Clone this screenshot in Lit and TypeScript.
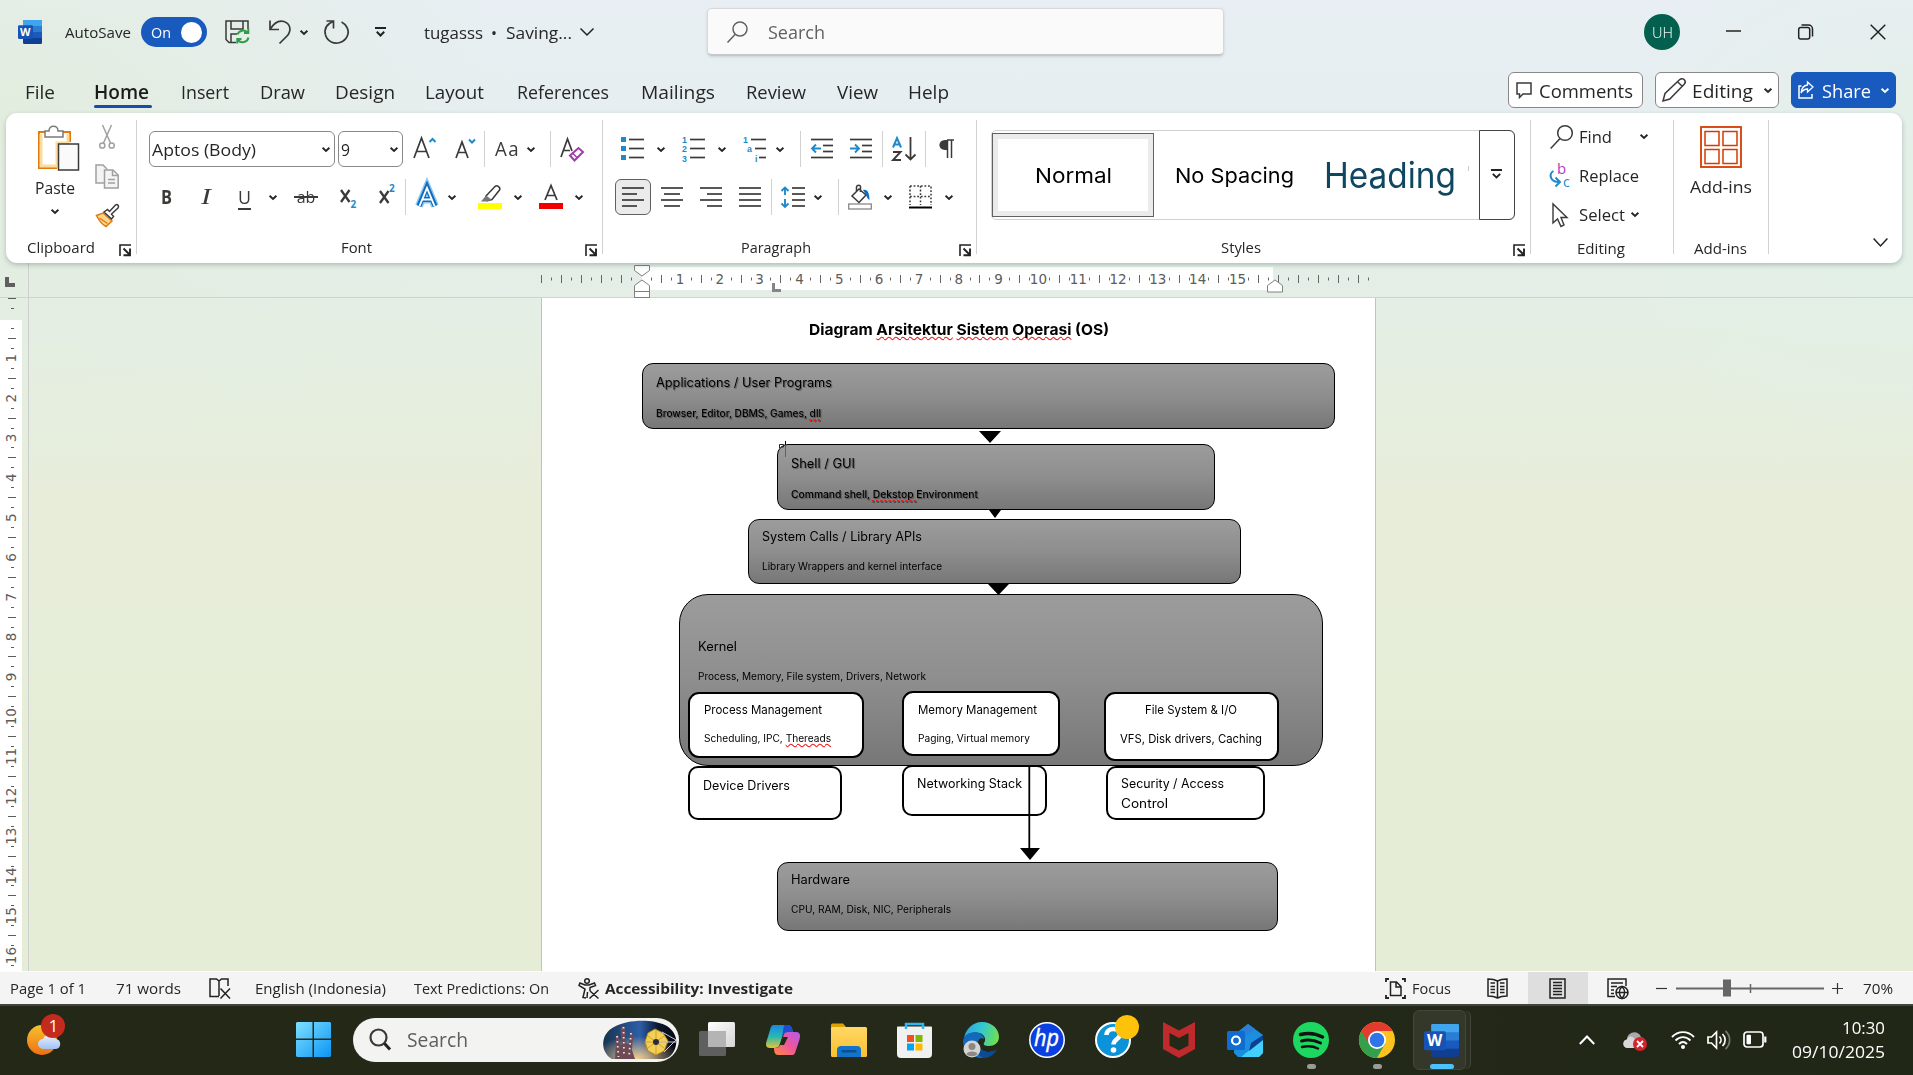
import { LitElement, html, svg, css, unsafeCSS } from "lit";
import { customElement, property } from "lit/decorators.js";
import { styleMap } from "lit/directives/style-map.js";

/* Spacing utilities: .m0 ... .m219 set the left margin in pixels. */
const spacing = unsafeCSS(
  Array.from({ length: 220 }, (_, i) => `.m${i}{margin-left:${i}px}`).join("")
);

/* Text squeezed or stretched horizontally to an exact width. */
@customElement("fit-text")
class FitText extends LitElement {
  @property({ type: Number }) w = 0;
  static styles = css`
    :host { display: inline-block; flex: none; white-space: nowrap; }
    .inner { display: inline-block; transform-origin: 0 50%; white-space: nowrap; }
  `;
  render() {
    return html`<span class="inner"><slot></slot></span>`;
  }
  updated() {
    const el = this.renderRoot.querySelector(".inner") as HTMLElement;
    el.style.transform = "";
    const natural = el.getBoundingClientRect().width;
    this.style.width = this.w + "px";
    if (natural > 0) el.style.transform = `scaleX(${this.w / natural})`;
  }
}

const ft = (w: number, text: unknown, cls = "") => html`<fit-text class=${cls} .w=${w}>${text}</fit-text>`;

const ic = (w: number, h: number, body: unknown, cls = "") =>
  html`<svg class="ic ${cls}" width=${w} height=${h} viewBox="0 0 ${w} ${h}" fill="none" stroke="#3b3a39" stroke-width="1.5">${body}</svg>`;

const chev = (cls = "", color = "#262626") =>
  html`<svg class="ic ${cls}" width="8" height="5" viewBox="0 0 8 5" fill="none" stroke=${color} stroke-width="1.9"><path d="M.6 .7 4 4 7.4 .7"/></svg>`;

const launcher = (cls: string) =>
  ic(12, 12, svg`<path d="M1 12V1H12" stroke="#222" stroke-width="1.6"/><path d="M4.500 4.500 10.500 10.500M11 4.500V11.200H4.500" stroke="#222" stroke-width="1.900"/>`, cls);

const BLUE = "#1f8acb";

const wordLogo = (w: number, h: number) => html`
  <svg class="ic" width=${w} height=${h} viewBox="0 0 24 24" preserveAspectRatio="none">
    <rect x="5" y="0" width="19" height="24" rx="1.2" fill="#103f91"/>
    <rect x="5" y="0" width="19" height="18" rx="1" fill="#185abd"/>
    <rect x="5" y="0" width="19" height="12" rx="1" fill="#2b7cd3"/>
    <path d="M6 0H23a1 1 0 0 1 1 1V6H5V1a1 1 0 0 1 1-1Z" fill="#41a5ee"/>
    <rect x="0" y="5.300" width="15" height="13.700" rx="1.200" fill="#1653b5"/>
    <text x="7.300" y="16" text-anchor="middle" font-family="Open Sans, sans-serif" font-weight="700" font-size="11" fill="#fff" textLength="10.500" lengthAdjust="spacingAndGlyphs">W</text>
  </svg>`;

const lines = (rows: number[][]) =>
  rows.map(([x, y, w]) => svg`<path d="M${x} ${y}h${w}" stroke="#3b3a39" stroke-width="1.700"/>`);

type Block = {
  x: number; y: number; w: number; h: number; r: number; kind: string;
  texts: { x: number; cy: number; w: number; cls: string; t: unknown }[];
};

const blocks: Block[] = [
  { x: 642, y: 363, w: 693, h: 66, r: 11, kind: "grey", texts: [
    { x: 656, cy: 383, w: 176, cls: "h sh", t: "Applications / User Programs" },
    { x: 656, cy: 414, w: 165, cls: "s sh", t: html`Browser, Editor, DBMS, Games, <u class="dot">dll</u>` } ] },
  { x: 777, y: 444, w: 438, h: 66, r: 11, kind: "grey", texts: [
    { x: 791, cy: 464, w: 64, cls: "h sh", t: "Shell / GUI" },
    { x: 791, cy: 495, w: 187, cls: "s sh", t: html`Command shell, <u class="dot">Dekstop </u>Environment` } ] },
  { x: 748, y: 519, w: 493, h: 65, r: 11, kind: "grey", texts: [
    { x: 762, cy: 537, w: 160, cls: "h", t: "System Calls / Library APIs" },
    { x: 762, cy: 567, w: 180, cls: "s", t: "Library Wrappers and kernel interface" } ] },
  { x: 688, y: 766, w: 154, h: 54, r: 10, kind: "white", texts: [
    { x: 703, cy: 786, w: 87, cls: "h", t: "Device Drivers" } ] },
  { x: 902, y: 765, w: 145, h: 51, r: 10, kind: "white", texts: [
    { x: 917, cy: 784, w: 105, cls: "h", t: "Networking Stack" } ] },
  { x: 1106, y: 766, w: 159, h: 54, r: 10, kind: "white", texts: [
    { x: 1121, cy: 784, w: 103, cls: "h", t: "Security / Access" },
    { x: 1121, cy: 804, w: 47, cls: "h", t: "Control" } ] },
  { x: 679, y: 594, w: 644, h: 172, r: 29, kind: "grey", texts: [
    { x: 698, cy: 647, w: 39, cls: "h", t: "Kernel" },
    { x: 698, cy: 677, w: 228, cls: "s", t: "Process, Memory, File system, Drivers, Network" } ] },
  { x: 688, y: 692, w: 176, h: 66, r: 11, kind: "white", texts: [
    { x: 704, cy: 710, w: 118, cls: "p", t: "Process Management" },
    { x: 704, cy: 739, w: 127, cls: "s", t: html`Scheduling, IPC, <u>Thereads</u>` } ] },
  { x: 902, y: 691, w: 158, h: 65, r: 11, kind: "white", texts: [
    { x: 918, cy: 710, w: 119, cls: "p", t: "Memory Management" },
    { x: 918, cy: 739, w: 112, cls: "s", t: "Paging, Virtual memory" } ] },
  { x: 1104, y: 692, w: 175, h: 69, r: 11, kind: "white", texts: [
    { x: 1145, cy: 710, w: 92, cls: "p", t: "File System & I/O" },
    { x: 1120, cy: 739, w: 142, cls: "p", t: "VFS, Disk drivers, Caching" } ] },
  { x: 777, y: 862, w: 501, h: 69, r: 11, kind: "grey", texts: [
    { x: 791, cy: 880, w: 59, cls: "h", t: "Hardware" },
    { x: 791, cy: 910, w: 160, cls: "s", t: "CPU, RAM, Disk, NIC, Peripherals" } ] },
];

/* Origin of the paper's inner area in window coordinates. */
const OX = 542, OY = 298;
const CM = 39.82;

@customElement("app-root")
class AppRoot extends LitElement {
  static styles = [spacing, css`
    :host {
      display: block; width: 1913px; height: 1075px; overflow: hidden;
      font-family: "Open Sans", "Noto Sans", sans-serif; color: #262626;
    }
    .app {
      display: flex; flex-direction: column; height: 1075px; overflow: hidden;
      background:
        radial-gradient(ellipse 520px 330px at 0 130px, rgba(226,237,222,1), rgba(228,238,224,0)),
        radial-gradient(ellipse 300px 260px at 1913px 200px, rgba(226,240,230,1), rgba(226,240,230,0)),
        linear-gradient(180deg, #e8eef3 0, #e7eef1 110px, #e4eee8 265px, #e5eee1 370px, #e7edd9 500px, #e6edd6 970px);
    }
    .ic { flex: none; display: block; overflow: visible; }
    .row { display: flex; align-items: center; }
    .col { display: flex; flex-direction: column; }
    .grow { flex: 1; }

    .title { height: 66px; box-sizing: border-box; padding-bottom: 2px; font-size: 15px; }
    .toggle { width: 66px; height: 30px; border-radius: 15px; background: #185abd; color: #fff; }
    .knob { width: 21px; height: 21px; border-radius: 50%; background: #fff; }
    .docname { font-size: 16.5px; }
    .search {
      width: 517px; height: 48px; border-radius: 5px; background: #fafafa; color: #616161;
      box-sizing: border-box; border: 1px solid #d6d9db; border-bottom: 2px solid #c5c8ca; font-size: 19px;
      box-shadow: 0 1px 3px rgba(0,0,0,.12);
    }
    .avatar { width: 36px; height: 36px; border-radius: 50%; background: #03604f; color: #e8f3f1; justify-content: center; font-size: 15px; font-family: "Noto Sans", sans-serif; font-weight: 300; }

    .tabs { height: 47px; align-items: stretch; font-size: 19px; }
    .tab { padding-top: 13px; height: 34px; line-height: 26px; display: flex; flex-direction: column; }
    .tab.on { font-weight: 600; color: #1b1b1b; }
    .tab.on::after { content: ""; width: 58px; height: 3px; margin-top: 0; border-radius: 2px; background: #154fa9; }
    .btn { height: 36px; margin-top: 6px; box-sizing: border-box; border: 1px solid #8a8886; border-radius: 6px; background: #fff; font-size: 18.500px; }
    .btn.share { background: #185abd; border-color: #185abd; color: #fff; }

    .ribbon {
      display: flex; position: relative; z-index: 2; flex: none; height: 150px; margin: 0 11px 0 6px; background: #fff;
      border-radius: 11px; box-shadow: 0 2px 5px rgba(40,70,60,.28);
    }
    .vs { flex: none; width: 1px; margin: 7px 0 9px; background: #d1d1d1; }
    .group { flex: none; display: flex; flex-direction: column; }
    .g-clip { width: 130px; } .g-font { width: 465px; } .g-para { width: 373px; }
    .g-style { width: 553px; } .g-edit { width: 142px; } .g-add { width: 94px; }
    .cmds { height: 102px; padding-top: 18px; box-sizing: border-box; display: flex; flex-direction: column; gap: 12px; }
    .r36 { height: 36px; display: flex; align-items: center; flex: none; }
    .label { height: 22px; margin-top: 21px; font-size: 15px; display: flex; align-items: center; }
    .label .ic { margin-top: 5px; }
    .clipcmds { height: 102px; display: flex; }
    .paste { margin-left: 27px; width: 44px; padding-top: 12px; display: flex; flex-direction: column; align-items: center; font-size: 16.500px; }
    .paste .clip { margin-left: 6px; }
    .paste .t { height: 24px; margin-top: 5px; }
    .paste .chevwrap { margin-top: 9px; }
    .clipside { margin-left: 18px; padding-top: 12px; display: flex; flex-direction: column; gap: 14px; align-items: center; width: 24px; }
    .combo { height: 36px; border: 1px solid #8a8886; border-radius: 6px; box-sizing: border-box; font-size: 17px; }
    .combo.fam { width: 186px; } .combo.size { width: 65px; }
    .ms { width: 1px; height: 36px; background: #d1d1d1; flex: none; }
    .glyph { line-height: 24px; height: 24px; flex: none; color: #3b3a39; }
    .b { font-weight: 700; font-size: 19.500px; }
    .i { font-family: "Liberation Serif", serif; font-style: italic; font-size: 23px; }
    .u { font-size: 19px; }
    .uline { text-decoration: underline; text-underline-offset: 4px; text-decoration-thickness: 1.500px; }
    .st { font-size: 17px; }
    .strike { text-decoration: line-through; text-decoration-thickness: 1.500px; }
    .aa { font-size: 20px; letter-spacing: 1.500px; }
    .sel { width: 36px; height: 36px; box-sizing: border-box; border: 1px solid #616161; border-radius: 6px; background: #ebebeb; display: flex; align-items: center; justify-content: center; }
    .gallery { margin: 17px 0 0 14px; width: 524px; height: 90px; box-sizing: border-box; border: 1px solid #d1d1d1; border-radius: 5px; display: flex; font-family: "Inter", sans-serif; color: #000; }
    .gcell { display: flex; align-items: center; font-size: 20.500px; }
    .normal { width: 162px; height: 84px; margin: 2px 0 0 0; box-sizing: border-box; border: 1px solid #616161; background: #fff; box-shadow: inset 0 0 0 5px #ebebeb; justify-content: center; }
    .heading { font-size: 35.500px; color: #0f4761; }
    .tickmark { width: 1px; height: 5px; background: #ccc; margin-top: -14px; }
    .more { margin: -1px -1px -1px auto; width: 36px; border: 1px solid #444; border-radius: 0 6px 6px 0; box-sizing: border-box; display: flex; align-items: center; justify-content: center; padding: 0 2px 2px 0; }
    .s-label { margin-top: 16px; }
    .editcmds { height: 123px; padding-top: 4px; box-sizing: border-box; display: flex; flex-direction: column; font-size: 17px; }
    .editrow { height: 39px; display: flex; align-items: center; }
    .addcmds { height: 123px; padding-top: 13px; box-sizing: border-box; display: flex; flex-direction: column; align-items: center; font-size: 17px; }
    .addcmds fit-text { margin-top: 7px; }
    .e-label { height: 24px; font-size: 15px; display: flex; align-items: center; justify-content: center; padding-right: 2px; }
    .collapse { margin: 125px 0 0 104px; }

    .hruler { flex: none; height: 35px; position: relative; }
    .ruler { display: block; }
    .ruler text { font-family: "DejaVu Sans", sans-serif; fill: #5c5c5c; }
    .work { flex: none; display: flex; height: 673px; overflow: hidden; }
    .edge { width: 1px; background: #cdd0cf; margin-left: 6px; }
    .paper { position: relative; margin-left: 512px; width: 833px; height: 673px; background: #fff; border: solid #c0c2c0; border-width: 0 1px; font-family: "Inter", sans-serif; color: #000; }
    .heading1 { position: absolute; left: 267px; top: 20px; line-height: 24px; font-size: 15.200px; font-weight: 700; }
    .block { position: absolute; box-sizing: border-box; border: 1px solid #000; }
    .block.grey { background: linear-gradient(180deg, #9c9c9c, #8e8e8e 50%, #777); }
    .block.white { background: #fff; border-width: 2px; }
    .txt { position: absolute; line-height: 20px; height: 20px; }
    .txt.h { font-size: 12.500px; } .txt.p { font-size: 12px; } .txt.s { font-size: 9.800px; }
    .txt.sh { text-shadow: 1px 1px 1px rgba(0,0,0,.4); font-weight: 400; }
    .txt.s.sh { font-weight: 500; }
    u { text-decoration: underline wavy #f01818 1px; text-underline-offset: 1px; text-decoration-skip-ink: none; }
    u.dot { text-decoration-style: dotted; text-decoration-thickness: 1.500px; text-underline-offset: 2px; }
    .over { position: absolute; left: 0; top: 0; }

    .status { flex: none; height: 33px; margin-top: 0; border-top: 1px solid #fdfdfd; background: #f4f4f4; font-size: 15px; box-sizing: border-box; }
    .status .bold { font-weight: 700; }
    .view { width: 60px; height: 32px; background: #dedede; display: flex; align-items: center; justify-content: center; padding-right: 2px; box-sizing: border-box; }
    .taskbar { flex: none; height: 71px; box-sizing: border-box; border-top: 2px solid #42453a; padding-bottom: 2px; background: linear-gradient(90deg, #232817, #252919 50%, #202717); color: #fff; }
    .pill { width: 326px; height: 44px; border-radius: 22px; background: #f3f3f1; color: #5e5e5e; font-size: 19.500px; }
    .clock { width: 93px; display: flex; flex-direction: column; align-items: flex-end; font-size: 16.500px; line-height: 24px; }
    .run { height: 60px; display: flex; flex-direction: column; align-items: center; }
    .run .ic { margin-top: 12px; }
    .pip { width: 9px; height: 5px; border-radius: 3px; background: #9a9b93; margin-top: 6px; }
    .active { width: 53px; box-sizing: border-box; border: 1px solid #43473a; border-radius: 6px; background: #33382a; box-shadow: 5px 0 0 -1px #2b3022, 6px 0 0 -1px #43473a; }
    .active .ic { margin: 13px 0 0 4px; }
    .active .pip { width: 24px; background: #4cc2ff; margin: 7px 0 0 5px; }
  `];

  titleBar() {
    return html`<div class="title row">
      <span class="m18"></span>${wordLogo(24, 24)}
      ${ft(66, "AutoSave", "m23")}
      <div class="toggle row m10">${ft(20, "On", "m10")}<span class="knob m10"></span></div>
      ${ic(25, 24, svg`<path d="M11 22.500H4L1 19.500V1H23V9M6 1V9H18V1M6 22V14H12"/><path d="M12.500 14.500a6 6 0 0 1 10-2M23.300 8.500V13H19M23.500 17.500a6 6 0 0 1-10.500 2.500M12.300 23.500V19H16.500" stroke="#2f9e48" stroke-width="2"/>`, "m18")}
      ${ic(22, 24, svg`<path d="M1 .5V9.500H10M1.300 9C5 3 10 0 15 1.500 22 4 22.500 11 18 16L10.500 23.500" stroke-width="1.700"/>`, "m19")}
      ${chev("m9")}
      ${ic(25, 24, svg`<path d="M2.500 1H9.500V8.500M9 1.500C3 4 0 9 1.500 15 3.500 21.500 10 24.500 16 22.500 23 20 26 13 23 7.500 21.500 4.500 19.500 3 17.500 2" stroke-width="1.700"/>`, "m16")}
      ${ic(11, 10, svg`<path d="M0 1H11M1.800 4.800 5.500 8.500 9.200 4.800" stroke="#222" stroke-width="2"/>`, "m26")}
      <span class="docname row m38">${ft(59, "tugasss")}${ft(6, "•", "m8")}${ft(66, "Saving...", "m9")}</span>
      ${ic(14, 8, svg`<path d="M.5 .5 7 7 13.500 .5" stroke="#222"/>`, "m8")}
      <div class="search row m113">
        ${ic(21, 22, svg`<circle cx="13" cy="8" r="7" stroke="#616161"/><path d="M8.500 13 .5 21.500" stroke="#616161"/>`, "m19")}
        ${ft(57, "Search", "m20")}
      </div>
      <span class="grow"></span>
      <span class="avatar row">${ft(21, "UH")}</span>
      ${ic(15, 16, svg`<path d="M0 7H15" stroke="#222"/>`, "m46")}
      ${ic(15, 16, svg`<rect x=".7" y="3.500" width="11" height="11.500" rx="2" stroke="#222"/><path d="M3.500 1H10.500a4 4 0 0 1 4 4V12.500" stroke="#222"/>`, "m57")}
      ${ic(16, 16, svg`<path d="M.7 .7 15.300 15.300M15.300 .7 .7 15.300" stroke="#222"/>`, "m57")}
      <span class="m27"></span>
    </div>`;
  }

  tabBar() {
    const tabs: [number, string, number][] = [[30, "File", 25], [55, "Home", 39], [48, "Insert", 32], [45, "Draw", 31], [60, "Design", 30],
      [59, "Layout", 30], [92, "References", 33], [74, "Mailings", 32], [60, "Review", 31], [41, "View", 31], [41, "Help", 30]];
    return html`<div class="tabs row">
      ${tabs.map(([w, t, m]) => html`<div class="tab m${t === "Insert" ? m - 3 : m} ${t === "Home" ? "on" : ""}">${ft(w, t)}</div>`)}
      <span class="grow"></span>
      <div class="btn row">
        ${ic(16, 17, svg`<path d="M1 1H15V12H7L3.500 15.500V12H1Z"/>`, "m7")}${ft(94, "Comments", "m7")}<span class="m9"></span>
      </div>
      <div class="btn row m12">
        ${ic(24, 24, svg`<path d="M1 23 3 15.500 17.500 1.800C19.500 0 21.500 .8 22.300 1.700 23.500 3 23.500 5 22 6.500L7.800 21ZM15.500 3.800 20.500 8.500"/>`, "m6")}
        ${ft(61, "Editing", "m6")}${chev("m11")}<span class="m6"></span>
      </div>
      <div class="btn share row m12">
        ${ic(16, 18, svg`<path d="M3.500 5H1V17H14V13" stroke="#fff"/><path d="M9.500 1 15 6 9.500 11V8C6.500 8 4.500 9.500 3 12 3.500 7 6 4.500 9.500 4Z" stroke="#fff" stroke-width="1.300"/>`, "m6")}
        ${ft(49, "Share", "m8")}${chev("m10", "#fff")}<span class="m6"></span>
      </div>
      <span class="m17"></span>
    </div>`;
  }

  clipboard() {
    return html`<div class="group g-clip">
      <div class="clipcmds">
        <div class="paste">
          ${ic(42, 46, svg`<path d="M9 7H2V43H20M26 7H33V17" stroke="#e07b12" stroke-width="2"/><path d="M4 9V41H20V18H31V9" fill="#fff" stroke="#fbdc9f" stroke-width="3"/><path d="M8 12V6H12C12 -.5 21 -.5 21 6H26V12Z" fill="#fff" stroke="#7a7a7a"/><rect x="21.500" y="19" width="20" height="26" fill="#fafafa" stroke="#3b3a39"/>`, "clip")}
          <span class="t">${ft(40, "Paste")}</span>
          <span class="chevwrap">${chev()}</span>
        </div>
        <div class="clipside">
          ${ic(16, 25, svg`<g stroke="#a0a0a0"><path d="M3.500 0 11.500 18M12.500 0 4.500 18"/><circle cx="3.300" cy="20.500" r="2.600"/><circle cx="12.700" cy="20.500" r="2.600"/></g>`)}
          ${ic(24, 25, svg`<g stroke="#a0a0a0"><path d="M9 19H1V1H8L12 5" fill="#f4f4f4"/><path d="M9.500 6H18L23.200 11V24H9.500Z" fill="#f4f4f4"/><path d="M17.500 6V11.500H23M13 15.500H20M13 19H20"/></g>`)}
          ${ic(24, 24, svg`<path d="M1.500 12.500 8 10 17 18 11 23.500C7 21.500 4 17.500 1.500 12.500Z" fill="#fbd690" stroke="#e07b12"/><path d="M4.500 15 12.500 20.500" stroke="#e07b12"/><path d="M9 9 12.500 6.500 14.500 8.500 20.500 2C22.500 .5 24.500 3 23 5L16.500 11 18.500 13.500 16.500 16Z" fill="#fff"/>`)}
        </div>
      </div>
      <div class="label">${ft(68, "Clipboard", "m21")}${launcher("m24")}</div>
    </div>`;
  }

  fontGroup() {
    return html`<div class="group g-font">
      <div class="cmds">
        <div class="r36">
          <div class="combo fam row m12">${ft(104, "Aptos (Body)", "m2")}<span class="grow"></span>${chev()}<span class="m4"></span></div>
          <div class="combo size row m3">${ft(9, "9", "m2")}<span class="grow"></span>${chev()}<span class="m4"></span></div>
          ${ic(24, 26, svg`<path d="M1 22 8.500 2 16 22M3.800 15.500H13.300" stroke-width="1.700"/><path d="M16.500 6 19.500 3 22.500 6" stroke="${BLUE}" stroke-width="2"/>`, "m10")}
          ${ic(21, 26, svg`<path d="M1 22 7 6 13 22M3.300 16.500H10.800" stroke-width="1.700"/><path d="M14 3.500 17 6.500 20 3.500" stroke="${BLUE}" stroke-width="2"/>`, "m18")}
          <span class="ms m8"></span>
          ${ft(25, "Aa", "glyph aa m10")}${chev("m7")}
          <span class="ms m15"></span>
          ${ic(24, 26, svg`<path d="M1 21 7.500 3 12 15M3.500 14.500H10" stroke-width="1.700"/><path d="M10 19.500 18.500 12 23 16 14.500 24.500Z" fill="#fff" stroke="#a33da8" stroke-width="2"/><path d="M12.500 17 17 21.500" stroke="#a33da8"/>`, "m9")}
        </div>
        <div class="r36">
          ${ft(11, "B", "glyph b m24")}${ft(10, "I", "glyph i m29")}${ft(13, html`<span class="uline">U</span>`, "glyph u m27")}${chev("m18")}
          ${ft(24, html`<span class="strike">&thinsp;ab&thinsp;</span>`, "glyph st m17")}
          ${ic(17, 26, svg`<path d="M1 6 9.500 18M9.500 6 1 18" stroke-width="2.300"/><text x="10.500" y="24" font-size="10" font-weight="700" fill="${BLUE}" stroke="none">2</text>`, "m22")}
          ${ic(17, 26, svg`<path d="M1 7 9.500 19M9.500 7 1 19" stroke-width="2.300"/><text x="10" y="8" font-size="10" font-weight="700" fill="${BLUE}" stroke="none">2</text>`, "m22")}
          <span class="ms m9"></span>
          ${ic(24, 26, svg`<path d="M4 22 12 3 20 22M7 15.500H17" stroke="#8fc8f3" stroke-width="8"/><path d="M4 22 12 3 20 22M7 15.500H17" stroke="#0f6cbd" stroke-width="5"/><path d="M4.500 22 12 4 19.500 22M7 15.500H17" stroke="#fff" stroke-width="1.900"/>`, "m9")}
          ${chev("m9")}
          ${ic(24, 26, svg`<rect x="0" y="19" width="24" height="6" fill="#ffff00" stroke="none"/><path d="M8 12 17 2.500C19 .5 23 3.500 21.500 6L14 15.500 9.500 16.500Z"/><path d="M8 11.500 13.500 15.500 10 17.500H3Z" fill="#777" stroke="none"/>`, "m22")}
          ${chev("m12")}
          ${ic(24, 26, svg`<rect x="0" y="19" width="24" height="6" fill="#f00000" stroke="none"/><path d="M6 16 12 1.500 18 16M8 11.500H16" stroke-width="1.700"/>`, "m17")}
          ${chev("m12")}
        </div>
      </div>
      <div class="label">${ft(31, "Font", "m204")}<span class="grow"></span>${launcher("")}<span class="m5"></span></div>
    </div>`;
  }

  paragraphGroup() {
    const num = (x: number, y: number, t: string) =>
      svg`<text x=${x} y=${y} font-family="Liberation Sans, sans-serif" font-size="8.800" font-weight="700" fill=${BLUE} stroke="none">${t}</text>`;
    return html`<div class="group g-para">
      <div class="cmds">
        <div class="r36">
          ${ic(23, 24, svg`<g fill="${BLUE}" stroke="none"><rect y="0" width="5" height="5"/><rect y="9" width="5" height="5"/><rect y="18" width="5" height="5"/></g>${lines([[8, 2.500, 15], [8, 11.500, 15], [8, 20.500, 15]])}`, "m18")}
          ${chev("m13")}
          ${ic(23, 24, svg`${num(0, 5.500, "1")}${num(0, 15, "2")}${num(0, 24.500, "3")}${lines([[8, 2.500, 15], [8, 11.500, 15], [8, 20.500, 15]])}`, "m17")}
          ${chev("m13")}
          ${ic(23, 24, svg`${num(0, 5.500, "1")}${num(4, 15, "a")}${num(12, 24.500, "i")}${lines([[8, 2.500, 15], [12, 11.500, 11], [16, 20.500, 7]])}`, "m17")}
          ${chev("m10")}
          <span class="ms m16"></span>
          ${ic(22, 24, svg`${lines([[0, 2.500, 22], [12, 8.500, 10], [12, 14.500, 10], [0, 20.500, 22]])}<path d="M10 11.500H1.500M5 7.500 1 11.500 5 15.500" stroke="${BLUE}" stroke-width="1.900"/>`, "m10")}
          ${ic(22, 24, svg`${lines([[0, 2.500, 22], [12, 8.500, 10], [12, 14.500, 10], [0, 20.500, 22]])}<path d="M0 11.500H8.500M5 7.500 9 11.500 5 15.500" stroke="${BLUE}" stroke-width="1.900"/>`, "m17")}
          <span class="ms m10"></span>
          ${ic(24, 24, svg`<path d="M1 10.500 5 1 9 10.500M2.500 7.500H7.500" stroke="${BLUE}" stroke-width="2"/><path d="M1 15H8.500L1 23H9" stroke-width="1.900"/><path d="M18.500 0V22M13.500 17.500 18.500 22.500 23.500 17.500" stroke-width="1.800"/>`, "m9")}
          <span class="ms m9"></span>
          ${ic(15, 20, svg`<path d="M8 1H15M8.500 1V19M12.500 1V19"/><path d="M8.500 1H6C-1.500 1-1.500 11 6 11H8.500Z" fill="#3b3a39" stroke="none"/>`, "m13")}
        </div>
        <div class="r36">
          <span class="sel m12">${ic(22, 24, lines([[0, 3, 22], [0, 9, 15], [0, 15, 22], [0, 21, 15]]))}</span>
          ${ic(22, 24, lines([[0, 3, 22], [3, 9, 16], [0, 15, 22], [3, 21, 16]]), "m10")}
          ${ic(22, 24, lines([[0, 3, 22], [7, 9, 15], [0, 15, 22], [7, 21, 15]]), "m17")}
          ${ic(22, 24, lines([[0, 3, 22], [0, 9, 22], [0, 15, 22], [0, 21, 22]]), "m17")}
          <span class="ms m10"></span>
          ${ic(24, 24, svg`${lines([[11, 3, 13], [11, 9, 13], [11, 15, 13], [11, 21, 13]])}<path d="M4 3V10M.5 6 4 2.500 7.500 6M4 14V21.500M.5 18.500 4 22 7.500 18.500" stroke="${BLUE}" stroke-width="1.900"/>`, "m9")}
          ${chev("m9")}
          <span class="ms m16"></span>
          ${ic(24, 26, svg`<rect x=".7" y="20" width="22.600" height="5" fill="#fff" stroke="#8a8886" stroke-width="1.300"/><path d="M11 5 4 12 11 18.500 18 11Z M8.500 8V3C9 .5 12.500 .5 12.500 3V8"/><path d="M15 6C19 5 21.500 8 21.500 16 19.500 15 19 13 18 11Z" fill="#0f6cbd" stroke="none"/>`, "m9")}
          ${chev("m12")}
          ${ic(23, 24, svg`<path d="M1 1H22V20M1 1V20M11.500 1V20M1 11.500H22" stroke-dasharray="1.800 1.800"/><path d="M0 22.500H23" stroke="#000" stroke-width="2"/>`, "m17")}
          ${chev("m13")}
        </div>
      </div>
      <div class="label">${ft(70, "Paragraph", "m138")}<span class="grow"></span>${launcher("")}<span class="m5"></span></div>
    </div>`;
  }

  stylesGroup() {
    return html`<div class="group g-style">
      <div class="gallery">
        <div class="gcell normal">${ft(77, "Normal")}</div>
        <div class="gcell">${ft(119, "No Spacing", "m21")}${ft(132, "Heading", "heading m30")}<span class="tickmark m12"></span></div>
        <div class="more">${ic(11, 10, svg`<path d="M0 1H11M1.800 4.800 5.500 8.500 9.200 4.800" stroke="#222" stroke-width="1.800"/>`)}</div>
      </div>
      <div class="label s-label"><span class="m199"></span>${ft(40, "Styles", "m45")}<span class="grow"></span>${launcher("")}<span class="m5"></span></div>
    </div>`;
  }

  editGroups() {
    return html`<div class="group g-edit">
        <div class="editcmds">
          <div class="editrow">${ic(23, 24, svg`<circle cx="15" cy="8" r="7.300"/><path d="M10 13.500 .7 23.500"/>`, "m19")}${ft(33, "Find", "m6")}${chev("m28")}</div>
          <div class="editrow">${ic(21, 25, svg`<text x="8" y="11" font-size="15" fill="#b13fc2" stroke="none">b</text><text x="14" y="24" font-size="14" fill="${BLUE}" stroke="none">c</text><path d="M4.500 8C-.5 11 1 19 10 19M6.500 14.500 11 19 6.500 23.500" stroke="${BLUE}" stroke-width="2"/>`, "m18")}${ft(60, "Replace", "m9")}</div>
          <div class="editrow">${ic(16, 24, svg`<path d="M1 1V20L5.500 16 9 23.500 12 22 9 14.500H15Z" stroke-width="1.400"/>`, "m21")}${ft(46, "Select", "m11")}${chev("m6")}</div>
        </div>
        <div class="e-label">${ft(48, "Editing")}</div>
      </div>
      <div class="vs"></div>
      <div class="group g-add">
        <div class="addcmds">
          ${ic(42, 42, svg`<g stroke="#d83b01"><rect x="1" y="1" width="40" height="40" stroke-width="1.800"/><rect x="5" y="5.500" width="14" height="14"/><rect x="23" y="5.500" width="14" height="14"/><rect x="5" y="23.500" width="14" height="14"/><rect x="23" y="23.500" width="14" height="14"/></g>`)}
          ${ft(62, "Add-ins")}
        </div>
        <div class="e-label">${ft(53, "Add-ins")}</div>
      </div>
      <div class="vs"></div>
      <div class="collapse">${ic(15, 9, svg`<path d="M.6 .6 7.500 8 14.400 .6" stroke="#222"/>`)}</div>`;
  }

  horizontalRuler() {
    const marks = [];
    for (let i = -10; i <= 73; i++) {
      const x = 641.5 + (i * CM) / 4;
      const cm = i / 4;
      const even = i % 2 === 0;
      if (Number.isInteger(cm) && cm >= 1 && cm <= 15) {
        marks.push(svg`<text x=${x - 1.300} y="20.500" font-size="13.500" text-anchor="middle">${cm}</text>`);
      } else if (i !== 0) {
        marks.push(svg`<path d="M${Math.floor(x) + 0.5} ${even ? 12 : 14.500}v${even ? 8 : 3}" stroke="#666"/>`);
      }
    }
    return html`<div class="hruler"><svg class="ruler" width="1913" height="35" fill="none">
      <rect x="642" y="4" width="631" height="23" fill="#fff"/>
      <path d="M28.500 0V34" stroke="#cdd0cf"/><path d="M0 34.500H1913" stroke="#cfd3d1"/>
      <path d="M7 14V22H15" stroke="#5f5f5f" stroke-width="4"/>
      ${marks}
      <g fill="#fff" stroke="#808080"><path d="M634.500 2.500H649.500V7.500L642 13 634.500 7.500Z"/><path d="M634.500 28.500V22.500L642 17 649.500 22.500V28.500Z"/><rect x="634.500" y="28.500" width="15" height="6"/><path d="M1267.500 29V22.500L1275 17 1282.500 22.500V29Z"/></g>
      <path d="M773.500 20V27.500H781" stroke="#858585" stroke-width="3"/>
    </svg></div>`;
  }

  verticalRuler() {
    const marks = [];
    for (let i = -2; i <= 65; i++) {
      if (i === 0) continue;
      const y = 20 + (i * CM) / 4;
      const cm = i / 4;
      if (Number.isInteger(cm) && cm >= 1) {
        marks.push(svg`<text transform="translate(16 ${y + 0.5}) rotate(-90)" font-size="13.500" text-anchor="middle">${cm}</text>`);
      } else {
        const even = i % 2 === 0;
        marks.push(svg`<path d="M${even ? 8 : 11} ${Math.round(y) + 0.5}h${even ? 8 : 3}" stroke="#5c5c5c"/>`);
      }
    }
    return html`<svg class="ruler" width="22" height="673"><rect y="22" width="22" height="651" fill="#fff"/>${marks}</svg>`;
  }

  documentArea() {
    return html`<div class="work">
      ${this.verticalRuler()}<span class="edge"></span>
      <div class="paper">
        ${ft(300, html`Diagram <u>Arsitektur</u> <u>Sistem</u> <u>Operasi</u> (OS)`, "heading1")}
        ${blocks.map((b) => html`
          <div class="block ${b.kind}" style=${styleMap({ left: b.x - OX + "px", top: b.y - OY + "px", width: b.w + "px", height: b.h + "px", borderRadius: b.r + "px" })}></div>
          ${b.texts.map((t) => html`<div class="txt ${t.cls}" style=${styleMap({ left: t.x - OX + "px", top: t.cy - 10 - OY + "px" })}>${ft(t.w, t.t)}</div>`)}
        `)}
        <svg class="over" width="833" height="673" viewBox="542 298 833 673" fill="#000">
          <path d="M979 431H1001L990 443ZM989 510H1001L995 518ZM988 584H1009L998.500 595ZM1020 848H1040L1030 860Z"/>
          <path d="M1029.300 766V850" stroke="#000" stroke-width="1.800"/>
          <path d="M785.500 441V445" stroke="#000"/><path d="M785.500 445V457" stroke="#606060"/>
          <path d="M779.500 448V444.500H783.500V447H781" stroke="#222" fill="none"/>
        </svg>
      </div>
    </div>`;
  }

  statusBar() {
    return html`<div class="status row">
      ${ft(76, "Page 1 of 1", "m10")}${ft(65, "71 words", "m30")}
      ${ic(22, 21, svg`<path d="M10 18.500H1V1H7.500L10 3 12.500 1H19V8M10 3V18M11.500 10.500 21 20.500M21 10.500 11.500 20.500" stroke="#222"/>`, "m28")}
      ${ft(131, "English (Indonesia)", "m24")}${ft(135, "Text Predictions: On", "m28")}
      ${ic(21, 21, svg`<circle cx="9" cy="3" r="2.300" stroke="#222"/><path d="M8 20 5 19.500 7 11 1 7.500 2 5 7 7H11L16.500 5 17.500 7.500 12 9.500V13M9 20 9.500 14M12 13 20.500 20.500M20.500 12 11.500 20.500" stroke="#222"/>`, "m29")}
      ${ft(188, "Accessibility: Investigate", "bold m6")}
      <span class="grow"></span>
      ${ic(21, 21, svg`<path d="M4 1H1V4M17 1H20V4M4 20H1V17M17 20H20V17" stroke="#222" stroke-width="1.800"/><path d="M5.500 4H11.500L16 8.500V17.500H5.500ZM11 4V9H16" stroke="#222"/>`)}
      ${ft(39, "Focus", "m6")}
      ${ic(21, 21, svg`<path d="M10.500 3C7 1 4 1 1 1V18C4 18 7 18 10.500 20 14 18 17 18 20 18V1C17 1 14 1 10.500 3V20M3.500 5H8M3.500 8.500H8M3.500 11.500H8M3.500 14.500H8M13 5H17.500M13 8.500H17.500M13 11.500H17.500M13 14.500H17.500" stroke="#222"/>`, "m36")}
      <span class="view m20">${ic(17, 21, svg`<rect x="1" y="1" width="15" height="19" stroke="#222"/><path d="M4 4.500H13M4 7.500H13M4 10.500H13M4 13.500H13M4 16.500H13" stroke="#222"/>`)}</span>
      ${ic(22, 21, svg`<path d="M8 18.500H1V1H19V8M4 5H16M4 8.500H10M4 12H7M4 15.500H7" stroke="#222"/><circle cx="15" cy="14.500" r="6" stroke="#222"/><path d="M9 14.500H21M15 8.500C11.500 12 11.500 17 15 20.500 18.500 17 18.500 12 15 8.500Z" stroke="#222"/>`, "m19")}
      ${ic(11, 11, svg`<path d="M0 5.500H11" stroke="#333" stroke-width="1.200"/>`, "m27")}
      ${ic(148, 20, svg`<path d="M0 10.500H148" stroke="#666" stroke-width="1.800"/><path d="M74.500 6V15" stroke="#666"/><rect x="47" y="1.500" width="8" height="17" fill="#666" stroke="none"/>`, "m9")}
      ${ic(11, 11, svg`<path d="M0 5.500H11M5.500 0V11" stroke="#333" stroke-width="1.200"/>`, "m8")}
      ${ft(30, "70%", "m20")}<span class="m20"></span>
    </div>`;
  }

  taskbar() {
    return html`<div class="taskbar row">
      ${ic(39, 44, svg`<defs><linearGradient id="sun" x1="0" y1="0" x2="0" y2="1"><stop offset="0" stop-color="#f7c22f"/><stop offset="1" stop-color="#ee7012"/></linearGradient><linearGradient id="cl" x1="0" y1="0" x2="0" y2="1"><stop offset="0" stop-color="#eaf2ff"/><stop offset="1" stop-color="#a3c1f2"/></linearGradient></defs>
        <g stroke="none"><circle cx="15" cy="22" r="15" fill="url(#sun)"/><path d="M16 31a5 5 0 0 1 0-10C18 15 27 15 28.500 21 35 21 34.500 31 29 31Z" fill="url(#cl)"/><circle cx="26" cy="8" r="12" fill="#c42b1c"/><text x="26.500" y="14" font-size="16.500" text-anchor="middle" fill="#fff">1</text></g>`, "m27")}
      <span class="m199"></span>
      ${ic(35, 35, svg`<defs><linearGradient id="win" x1="0" y1="0" x2="1" y2="1"><stop offset="0" stop-color="#7fe0ff"/><stop offset="1" stop-color="#0a95f5"/></linearGradient></defs><path d="M1 0H16.500V16.500H0V1ZM18 0H34L35 1V16.500H18ZM0 18H16.500V35H1L0 34ZM18 18H35V34L34 35H18Z" fill="url(#win)" stroke="none"/>`, "m31")}
      <div class="pill row m22">
        ${ic(22, 23, svg`<circle cx="9.500" cy="9.500" r="8" stroke="#3a3a3a" stroke-width="2.200"/><path d="M15.500 15.500 21 21.500" stroke="#222" stroke-width="3"/>`, "m16")}
        ${ft(61, "Search", "m16")}
        <span class="grow"></span>
        ${ic(75, 40, svg`<defs><linearGradient id="sky" x1="0" y1="0" x2="1" y2="0"><stop offset="0" stop-color="#17324f"/><stop offset=".5" stop-color="#2d5fa8"/><stop offset=".75" stop-color="#0b1730"/><stop offset="1" stop-color="#06080f"/></linearGradient><radialGradient id="glow" cx=".45" cy="1" r=".6"><stop offset="0" stop-color="#f7cf8c"/><stop offset="1" stop-color="#f7cf8c" stop-opacity="0"/></radialGradient></defs>
          <g stroke="none"><path d="M10 39C-2 32-2 14 12 7 26-1 50-1 63 5 76 12 76 24 72 31 69 37 64 39 60 39Z" fill="url(#sky)"/><path d="M10 39C-2 32-2 14 12 7 26-1 50-1 63 5 76 12 76 24 72 31 69 37 64 39 60 39Z" fill="url(#glow)"/>
          <path d="M13 39 14 22C13 14 17 13 17.500 20L18 25H19.500L18.500 10C19 5 23 5 23.500 10V23L27 24 27.500 15C28 11 31 12 31 16L30 30 33 39Z" fill="#6d4a55"/></g>
          <path d="M15 16 16.500 37M21.500 7 22 37M29 13 27 37" stroke="#f3e3d6" stroke-width="1.800" stroke-dasharray="1.500 3.500"/>
          <path d="M53 9 61 13 66 21 62 31 54 35 46 31 43 22 46 13Z" fill="#f2d057" stroke="#b98a1a" stroke-width="1"/><path d="M46 16 62 28M62 16 46 28M54 10V34M44 22H65" stroke="#c9961f" stroke-width=".8"/><circle cx="54" cy="22" r="3" fill="#2a2a3c" stroke="none"/><path d="M60 12 74 20 62 32M58 22H74" stroke="#c9cbe0" stroke-width="1"/>`)}
        <span class="m2"></span>
      </div>
      ${ic(36, 35, svg`<defs><linearGradient id="tv" x1="0" y1="0" x2="1" y2="1"><stop offset="0" stop-color="#fff"/><stop offset="1" stop-color="#d5d5d5"/></linearGradient></defs><g stroke="none"><rect x="9" y="0" width="27" height="25" rx="1.500" fill="url(#tv)"/><rect x="0" y="9" width="27" height="25" rx="1.500" fill="#5f5f5f"/><path d="M9 9H27V25H9Z" fill="#b4b4b4"/></g>`, "m20")}
      ${ic(34, 32, svg`<defs><linearGradient id="c1" x1="0" y1="0" x2="0" y2="1"><stop offset="0" stop-color="#1787e8"/><stop offset=".5" stop-color="#2ab7b0"/><stop offset="1" stop-color="#e6c534"/></linearGradient><linearGradient id="c2" x1="1" y1="0" x2="0" y2="1"><stop offset="0" stop-color="#b25cf0"/><stop offset=".5" stop-color="#f0569a"/><stop offset="1" stop-color="#ff8a3c"/></linearGradient></defs>
        <g stroke="none"><path d="M8 1H22C25 1 26 4 27 8H21C18 8 17 10 16 13L14 20C13 23 11 24 8 24H4C0 24-1 21 1 16L4 6C5 2 6 1 8 1Z" fill="url(#c1)"/><path d="M26 31H12C9 31 8 28 8 24 13 24 14 22 15 19L18 10C19 8 21 8 24 8H30C34 8 35 11 33 17L30 26C29 30 28 31 26 31Z" fill="url(#c2)"/><path d="M18 1H22C25 1 26 4 27 8H21C18 8 17 10 16 13Z" fill="#1c4fd0"/><path d="M17 13H22L18 21H13.500Z" fill="#232817"/></g>`, "m31")}
      ${ic(36, 34, svg`<defs><linearGradient id="fo" x1="0" y1="0" x2="0" y2="1"><stop offset="0" stop-color="#ffd866"/><stop offset="1" stop-color="#fbbf2e"/></linearGradient></defs><g stroke="none"><path d="M0 2a1.500 1.500 0 0 1 1.500-1.500H12L15 4V9H0Z" fill="#dfa100"/><rect y="4" width="36" height="30" rx="1.500" fill="url(#fo)"/><path d="M6 34V27C6 24 8 23 10 23H26C29 23 30 25 30 27V34Z" fill="#1173c9"/><rect x="10.500" y="27" width="15" height="2.500" rx="1" fill="#0a4f94"/></g>`, "m31")}
      ${ic(35, 36, svg`<path d="M9 8V2H26V8" stroke="#31b5ee" stroke-width="2.500"/><g stroke="none"><path d="M1 4.500H34A1 1 0 0 1 35 5.500V32a4 4 0 0 1-4 4H4a4 4 0 0 1-4-4V5.500A1 1 0 0 1 1 4.500Z" fill="#f1f1f1"/><rect x="10" y="13" width="7" height="7" fill="#f25022"/><rect x="18.500" y="13" width="7" height="7" fill="#7fba00"/><rect x="10" y="21.500" width="7" height="7" fill="#00a4ef"/><rect x="18.500" y="21.500" width="7" height="7" fill="#ffb900"/></g><path d="M9 4V7M26 4V7" stroke="#31b5ee" stroke-width="2.500"/>`, "m30")}
      ${ic(36, 36, svg`<defs><linearGradient id="ed" x1="0" y1=".3" x2="1" y2=".5"><stop offset="0" stop-color="#2aa5e8"/><stop offset=".5" stop-color="#33c9cf"/><stop offset="1" stop-color="#6fe04d"/></linearGradient></defs><g stroke="none"><path d="M1 17C2 8 9 0 19 0 29 0 36 7 36 15 36 21 31 24 26 24 22 24 20 23 21 21 24 17 21 11 14 10.500 8 10 3 12 1 17Z" fill="url(#ed)"/><path d="M0 19C1 12 7 10 13 10.500 18 11 21 14 21 17 18 15 15 17 15 21 15 27 22 32 30 29 27 33 23 36 19 36 8 36 0 28 0 19Z" fill="#1369bd"/><path d="M14 19C13 26 19 30 25 30 29 30 32 28 34 27 31 33 26 36 21 36 14 34 11 25 14 19Z" fill="#0b4a94"/><circle cx="9" cy="27" r="8.500" fill="#d6d4d2"/><circle cx="9" cy="24.500" r="3.500" fill="#8a8784"/><path d="M3.500 32C4 28.500 14 28.500 14.500 32 12 35 6 35 3.500 32Z" fill="#8a8784"/></g>`, "m31")}
      ${ic(36, 36, svg`<circle cx="18" cy="18" r="17.200" fill="#0a3fe0" stroke="#fff" stroke-width="1.500"/><text x="17.500" y="24" text-anchor="middle" font-style="italic" font-size="24" font-weight="400" fill="#fff" stroke="#fff" stroke-width=".5" textLength="25" lengthAdjust="spacingAndGlyphs">hp</text>`, "m30")}
      ${ic(44, 44, svg`<circle cx="18" cy="22" r="17" fill="#0a93d8" stroke="#fff" stroke-width="2"/><path d="M11.500 17C11.500 9 25 9 25 16.500 25 21 18.500 21 18.500 26.500" stroke="#fff" stroke-width="4.500"/><circle cx="18.500" cy="32" r="2.800" fill="#fff" stroke="none"/><circle cx="32" cy="9" r="12" fill="#ffc20a" stroke="none"/>`, "m30")}
      ${ic(32, 36, svg`<path d="M0 0 16 8.500 32 0V27L16 36 0 27Z" fill="#bf2a2c" stroke="none"/><path d="M6.500 11 16 16 25.500 11V23.500L16 28.500 6.500 23.500Z" fill="#232817" stroke="none"/>`, "m24")}
      ${ic(36, 34, svg`<g stroke="none"><path d="M7 12 21 1 36 12V30L32 34H11L7 30Z" fill="#1a8fe0"/><path d="M7 12 21 1 28 6 12 20Z" fill="#2a7fd8"/><path d="M36 12V30L32 34H14L36 16Z" fill="#42d0fa"/><path d="M24 20 36 12V17L22 28Z" fill="#103f91"/><rect x="0" y="8" width="18" height="19" rx="1.500" fill="#0f6cd0"/><circle cx="9" cy="17.500" r="4" fill="none" stroke="#fff" stroke-width="2.200"/></g>`, "m32")}
      <div class="run m30">${ic(36, 36, svg`<circle cx="18" cy="18" r="18" fill="#1ed760" stroke="none"/><path d="M7.500 12.500C15 10.500 23 11.500 29.500 15" stroke="#121212" stroke-width="3.500" stroke-linecap="round"/><path d="M8.500 19C15 17 21.500 18 27.500 21" stroke="#121212" stroke-width="3" stroke-linecap="round"/><path d="M9 25C15 23.500 20 24 25 26.500" stroke="#121212" stroke-width="2.500" stroke-linecap="round"/>`)}<span class="pip"></span></div>
      <div class="run m30">${ic(36, 36, svg`<g stroke="none"><circle cx="18" cy="18" r="18" fill="#fcc31e"/><path d="M18 18 2.400 9A18 18 0 0 0 18 36L26 22Z" fill="#34a04c"/><path d="M18 9H33.600A18 18 0 0 0 2.400 9L10 22 18 18Z" fill="#e33b2e"/><circle cx="18" cy="18" r="9" fill="#fff"/><circle cx="18" cy="18" r="7.300" fill="#2f74e8"/></g>`)}<span class="pip"></span></div>
      <div class="run active m18">${wordLogo(35, 33)}<span class="pip"></span></div>
      <span class="grow"></span>
      ${ic(16, 10, svg`<path d="M.8 9 8 1.500 15.200 9" stroke="#fff" stroke-width="2"/>`)}
      ${ic(24, 22, svg`<g stroke="none"><path d="M5 19C-1 19-1 11 4 10.500 4 3 15 0 18 8 22 9 22 14 20 19Z" fill="#a9a9a9"/><path d="M5 19C-1 19-1 11 4 10.500 6 5 14 7 14 19Z" fill="#d8d8d8"/><circle cx="17" cy="15" r="7" fill="#d3222e"/></g><path d="M14 12 20 18M20 12 14 18" stroke="#fff" stroke-width="1.800"/>`, "m28")}
      ${ic(24, 20, svg`<path d="M1 7C7 .5 17 .5 23 7M4.500 10.500C9 6 15 6 19.500 10.500M8 14C10.500 11.500 13.500 11.500 16 14" stroke="#fff" stroke-width="1.900"/><circle cx="12" cy="17" r="2" fill="#fff" stroke="none"/>`, "m24")}
      ${ic(24, 20, svg`<path d="M1 7H4.500L9.500 2V18L4.500 13H1Z" stroke="#fff" stroke-width="1.700"/><path d="M12.500 6.500C14.500 8.500 14.500 11.500 12.500 13.500M15.500 4C19 7.500 19 12.500 15.500 16" stroke="#fff" stroke-width="1.700"/><path d="M18.500 1C24 6 24 14 18.500 19" stroke="#777b6d" stroke-width="1.700"/>`, "m12")}
      ${ic(24, 17, svg`<rect x="1" y="1" width="19" height="15" rx="3" stroke="#fff" stroke-width="1.700"/><rect x="3.500" y="3.800" width="4.500" height="9.500" rx="1" fill="#fff" stroke="none"/><path d="M22.300 5.500V11.500" stroke="#fff" stroke-width="2.200"/>`, "m12")}
      <div class="clock m25">${ft(43, "10:30")}${ft(93, "09/10/2025")}</div>
      <span class="m28"></span>
    </div>`;
  }

  render() {
    return html`<div class="app">
      ${this.titleBar()}${this.tabBar()}
      <div class="ribbon">
        ${this.clipboard()}<div class="vs"></div>
        ${this.fontGroup()}<div class="vs"></div>
        ${this.paragraphGroup()}<div class="vs"></div>
        ${this.stylesGroup()}<div class="vs"></div>
        ${this.editGroups()}
      </div>
      ${this.horizontalRuler()}${this.documentArea()}${this.statusBar()}${this.taskbar()}
    </div>`;
  }
}
